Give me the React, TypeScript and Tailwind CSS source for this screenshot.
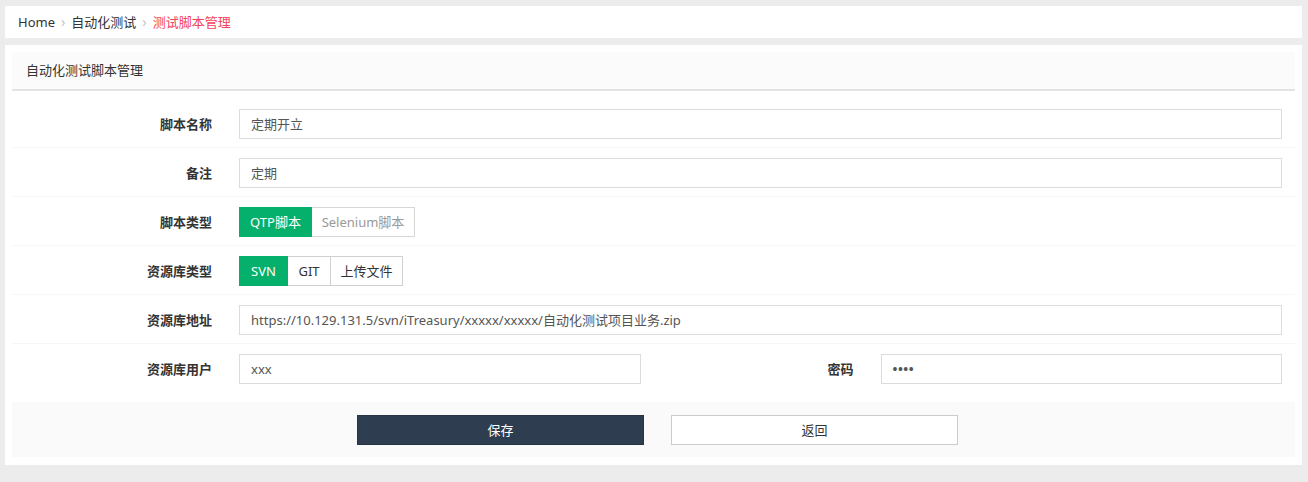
import React from "react";

const font = { fontFamily: '"Noto Sans", "Noto Sans CJK SC", sans-serif' };

function Row({ children, last }: { children: React.ReactNode; last?: boolean }) {
  return (
    <div className={`flex items-center pt-[10px] pb-[8px] ${last ? "" : "border-b border-[#f7f7f7]"}`}>
      {children}
    </div>
  );
}

function Label({ text }: { text: string }) {
  return (
    <div className="w-[200px] shrink-0 text-right font-bold text-[13px] text-[#333] leading-[30px] mr-[27px]">
      {text}
    </div>
  );
}

function Input({ value, className = "" }: { value: string; className?: string }) {
  return (
    <div
      className={`h-[30px] border border-[#dcdcdc] bg-white pl-[11px] text-[13px] text-[#555] leading-[28px] whitespace-nowrap overflow-hidden ${className}`}
    >
      {value}
    </div>
  );
}

export default function App() {
  return (
    <div className="w-[1308px] h-[482px] bg-[#ececec] pt-[6px] pl-[5px] pr-[6px]" style={font}>
      {/* breadcrumb */}
      <div className="h-[32px] bg-white flex items-center pl-[13px] text-[13px] leading-none">
        <span className="text-[#333]">Home</span>
        <span className="text-[#c4c4c4] mx-[6px] text-[14px]">›</span>
        <span className="text-[#333]">自动化测试</span>
        <span className="text-[#c4c4c4] mx-[6px] text-[14px]">›</span>
        <span className="text-[#f2445a]">测试脚本管理</span>
      </div>

      {/* panel */}
      <div className="mt-[7px] bg-white p-[7px] h-[420px]">
        <div className="h-[39px] bg-[#fbfbfb] border-b-2 border-[#e3e3e3] flex items-center pl-[14px] text-[13px] text-[#333]">
          自动化测试脚本管理
        </div>

        <div className="pt-[8px]">
          <Row>
            <Label text="脚本名称" />
            <Input value="定期开立" className="flex-1 mr-[13px]" />
          </Row>
          <Row>
            <Label text="备注" />
            <Input value="定期" className="flex-1 mr-[13px]" />
          </Row>
          <Row>
            <Label text="脚本类型" />
            <div className="flex h-[30px] text-[13px] leading-[28px]">
              <div className="w-[73px] text-center bg-[#04b06b] border border-[#04b06b] text-white">QTP脚本</div>
              <div className="w-[103px] text-center border border-[#d6d6d6] border-l-0 text-[#999] bg-white">Selenium脚本</div>
            </div>
          </Row>
          <Row>
            <Label text="资源库类型" />
            <div className="flex h-[30px] text-[13px] leading-[28px]">
              <div className="w-[49px] text-center bg-[#04b06b] border border-[#04b06b] text-white">SVN</div>
              <div className="w-[43px] text-center border border-[#d0d0d0] border-l-0 text-[#333] bg-white">GIT</div>
              <div className="w-[72px] text-center border border-[#d0d0d0] border-l-0 text-[#333] bg-white">上传文件</div>
            </div>
          </Row>
          <Row>
            <Label text="资源库地址" />
            <Input
              value="https://10.129.131.5/svn/iTreasury/xxxxx/xxxxx/自动化测试项目业务.zip"
              className="flex-1 mr-[13px]"
            />
          </Row>
          <Row last>
            <div className="flex flex-1 items-center">
              <Label text="资源库用户" />
              <Input value="xxx" className="flex-1 mr-[13px]" />
            </div>
            <div className="flex flex-1 items-center">
              <Label text="密码" />
              <Input value="••••" className="flex-1 mr-[13px] tracking-[0.5px] text-[#444] font-bold" />
            </div>
          </Row>
        </div>

        <div className="mt-[10px] h-[55px] bg-[#fafafa] flex items-center justify-center pl-[8px] gap-[27px]">
          <div className="w-[287px] h-[30px] bg-[#2e3d4f] border border-[#263444] text-white text-[13px] leading-[28px] text-center">
            保存
          </div>
          <div className="w-[287px] h-[30px] bg-white border border-[#cccccc] text-[#333] text-[13px] leading-[28px] text-center">
            返回
          </div>
        </div>
      </div>
    </div>
  );
}
